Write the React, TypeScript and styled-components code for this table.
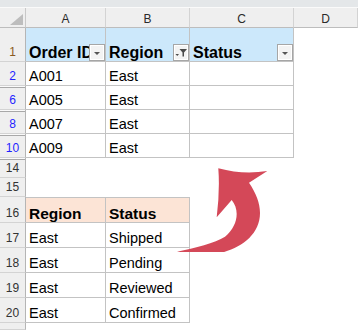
import styled, { createGlobalStyle } from "styled-components"

const GlobalStyle = createGlobalStyle`
    html, body {
        margin: 0;
        padding: 0;
        overflow: hidden;
        background: #ffffff;
    }
    body {
        font-family: "Liberation Sans", Arial, sans-serif;
    }
`

const TopBand = styled.div`
    height: 7px;
    background-color: #e4e7e9;
    border-bottom: 1px solid #fafafa;
`

const Sheet = styled.div`
    position: relative;
    display: grid;
    grid-template-columns: 26px 80px 84px 104px 1fr;
`

const Corner = styled.div`
    position: relative;
    height: 20px;
    box-sizing: border-box;
    background-color: #efefef;
    border-right: 1px solid #c8c8c8;
    border-bottom: 1px solid #bdbdbd;

    &::after {
        content: "";
        position: absolute;
        right: 2px;
        bottom: 2px;
        width: 13px;
        height: 11px;
        background-color: #bdbdbd;
        clip-path: polygon(100% 0, 100% 100%, 0 100%);
    }
`

const ColHead = styled.div`
    box-sizing: border-box;
    display: flex;
    align-items: center;
    justify-content: center;
    padding-top: 2px;
    background-color: #efefef;
    border-right: 1px solid #d3d3d3;
    border-bottom: 1px solid #bdbdbd;
    font-size: 12px;
    color: #2a2a2a;
`

type Tone = "head" | "filtered" | "plain"

const rowColors: Record<Tone, string> = {
    head: "#8a5a20",
    filtered: "#1f1fff",
    plain: "#333333",
}

const RowHead = styled.div<{ $tone: Tone; $gap?: boolean; $h: number }>`
    box-sizing: border-box;
    height: ${(p) => p.$h}px;
    display: flex;
    align-items: flex-end;
    justify-content: center;
    padding-bottom: 2px;
    background-color: #efefef;
    border-right: 1px solid #b5b5b5;
    border-bottom: 1px solid #d3d3d3;
    font-size: 12px;
    line-height: 14px;
    color: ${(p) => rowColors[p.$tone]};
    box-shadow: ${(p) => (p.$gap ? "inset 0 1px 0 #fafafa, inset 0 2px 0 #a8a8a8" : "none")};
`

type Kind = "th" | "td" | "sub" | "none"

const cellBg: Record<Kind, string> = {
    th: "#cce8fb",
    td: "#ffffff",
    sub: "#fce4d6",
    none: "#ffffff",
}

const Cell = styled.div<{ $kind: Kind }>`
    position: relative;
    box-sizing: border-box;
    display: flex;
    align-items: flex-end;
    padding: 0 0 0 3px;
    overflow: hidden;
    white-space: nowrap;
    background-color: ${(p) => cellBg[p.$kind]};
    border-right: 1px solid ${(p) => (p.$kind === "none" ? "transparent" : "#c3c3c3")};
    border-bottom: 1px solid ${(p) => (p.$kind === "none" ? "transparent" : "#c3c3c3")};
    border-top: ${(p) => (p.$kind === "sub" ? "1px solid #c3c3c3" : "0")};
    font-size: ${(p) => (p.$kind === "th" ? "16px" : p.$kind === "sub" ? "15.5px" : "14.5px")};
    line-height: 17px;
    font-weight: ${(p) => (p.$kind === "th" || p.$kind === "sub" ? 700 : 400)};
    color: #000000;
`

const FilterButton = styled.span`
    position: absolute;
    right: 0;
    bottom: 0;
    width: 16px;
    height: 17px;
    box-sizing: border-box;
    border: 1px solid #a6a6a6;
    background-color: #f3f3f3;
    box-shadow: inset 0 0 0 1px #ffffff;
    display: flex;

    svg {
        width: 14px;
        height: 15px;
    }
`

const ArrowMark = styled.svg`
    position: absolute;
    left: 170px;
    top: 144px;
    width: 100px;
    height: 100px;
    pointer-events: none;
`

type Btn = "down" | "filter"

interface CellData {
    kind: Kind
    text?: string
    btn?: Btn
}

interface RowData {
    n: string
    tone: Tone
    h: number
    gap?: boolean
    cells: CellData[]
}

const blank: CellData = { kind: "none" }

const rows: RowData[] = [
    {
        n: "1", tone: "head", h: 34,
        cells: [
            { kind: "th", text: "Order ID", btn: "down" },
            { kind: "th", text: "Region", btn: "filter" },
            { kind: "th", text: "Status", btn: "down" },
            blank,
        ],
    },
    { n: "2", tone: "filtered", h: 24, cells: [{ kind: "td", text: "A001" }, { kind: "td", text: "East" }, { kind: "td" }, blank] },
    { n: "6", tone: "filtered", h: 24, gap: true, cells: [{ kind: "td", text: "A005" }, { kind: "td", text: "East" }, { kind: "td" }, blank] },
    { n: "8", tone: "filtered", h: 24, gap: true, cells: [{ kind: "td", text: "A007" }, { kind: "td", text: "East" }, { kind: "td" }, blank] },
    { n: "10", tone: "filtered", h: 24, gap: true, cells: [{ kind: "td", text: "A009" }, { kind: "td", text: "East" }, { kind: "td" }, blank] },
    { n: "14", tone: "plain", h: 20, gap: true, cells: [blank, blank, blank, blank] },
    { n: "15", tone: "plain", h: 19, cells: [blank, blank, blank, blank] },
    { n: "16", tone: "plain", h: 26, cells: [{ kind: "sub", text: "Region" }, { kind: "sub", text: "Status" }, blank, blank] },
    { n: "17", tone: "plain", h: 25, cells: [{ kind: "td", text: "East" }, { kind: "td", text: "Shipped" }, blank, blank] },
    { n: "18", tone: "plain", h: 25, cells: [{ kind: "td", text: "East" }, { kind: "td", text: "Pending" }, blank, blank] },
    { n: "19", tone: "plain", h: 25, cells: [{ kind: "td", text: "East" }, { kind: "td", text: "Reviewed" }, blank, blank] },
    { n: "20", tone: "plain", h: 25, cells: [{ kind: "td", text: "East" }, { kind: "td", text: "Confirmed" }, blank, blank] },
    { n: "", tone: "plain", h: 7, cells: [blank, blank, blank, blank] },
]

const ButtonIcon = ({ type }: { type: Btn }) => (
    <FilterButton>
        <svg viewBox="0 0 14 15">
            {type === "down" ? (
                <polygon points="4,7 10,7 7,10" fill="#555555" />
            ) : (
                <>
                    <polygon points="5.5,4 13,4 10,7.5 10,11.5 8.5,11.5 8.5,7.5" fill="#4a4a4a" />
                    <polygon points="1.5,9 5,9 3.25,11" fill="#4a4a4a" />
                </>
            )}
        </svg>
    </FilterButton>
)

const App = () => {
    return (
        <>
            <GlobalStyle />
            <TopBand />
            <Sheet>
                <Corner />
                <ColHead>A</ColHead>
                <ColHead>B</ColHead>
                <ColHead>C</ColHead>
                <ColHead>D</ColHead>
                {rows.map((row, i) => (
                    <>
                        <RowHead key={`h${i}`} $tone={row.tone} $gap={row.gap} $h={row.h}>
                            {row.n}
                        </RowHead>
                        {row.cells.map((c, j) => (
                            <Cell key={`c${i}-${j}`} $kind={c.kind}>
                                {c.text}
                                {c.btn && <ButtonIcon type={c.btn} />}
                            </Cell>
                        ))}
                    </>
                ))}
                <ArrowMark viewBox="0 0 100 100">
                    <path
                        d="M48.3 16.3 Q73 23 97.3 19 L79 30.7 C86 41 90 51 90 61 C90 88 60 103 33 103 L7 99.7 C25 96 45 91 55 84.7 C68 74 70 58 61.7 48 L46.7 65.3 Q50 38 48.3 16.3 Z"
                        fill="#d44858"
                    />
                </ArrowMark>
            </Sheet>
        </>
    )
}

export default App
